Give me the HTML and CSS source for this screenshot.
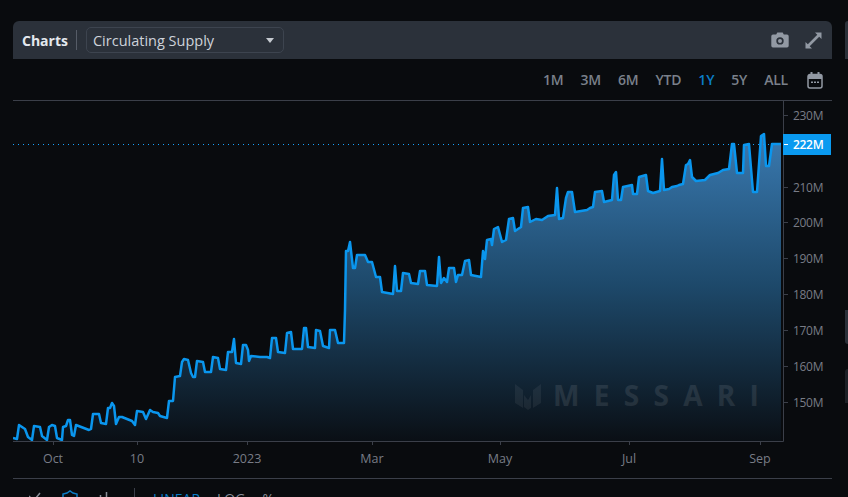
FILE: index.html
```html
<!DOCTYPE html>
<html lang="en">
<head>
<meta charset="UTF-8" />
<meta name="viewport" content="width=device-width, initial-scale=1" />
<title>Charts - Circulating Supply</title>
<link rel="stylesheet" href="styles.css">
</head>
<body>

<div class="card">
  <div class="card-head">
    <span class="card-title">Charts</span>
    <span class="head-divider"></span>
    <div class="select">
      <span>Circulating Supply</span>
      <span class="caret"></span>
    </div>
    <div class="head-icons">
      <svg class="icon" width="18" height="16" viewBox="0 0 18 16">
        <path class="icon-fill" fill-rule="evenodd" d="M2 2.500h3.200L6.300 .5h5.400l1.100 2H16a1.700 1.700 0 0 1 1.700 1.700v9.600A1.700 1.700 0 0 1 16 15.500H2a1.700 1.700 0 0 1-1.700-1.700V4.200A1.700 1.700 0 0 1 2 2.500zM9 5.200a3.700 3.700 0 1 0 0 7.400 3.700 3.700 0 0 0 0-7.400zM9 6.900a2 2 0 1 1 0 4 2 2 0 0 1 0-4z"/>
      </svg>
      <svg class="icon" width="17" height="17" viewBox="0 0 17 17">
        <path class="icon-fill" d="M10 .5h6.500V7l-2.300-2.300-9.500 9.500L7 16.500H.5V10l2.300 2.300 9.500-9.500z"/>
      </svg>
    </div>
  </div>

  <div class="range-bar">
    <button class="range-btn">1M</button>
    <button class="range-btn">3M</button>
    <button class="range-btn">6M</button>
    <button class="range-btn">YTD</button>
    <button class="range-btn active">1Y</button>
    <button class="range-btn">5Y</button>
    <button class="range-btn">ALL</button>
    <svg class="calendar" width="16" height="18" viewBox="0 0 16 18">
      <path class="cal-line" d="M1 5.500A2 2 0 0 1 3 3.500h10a2 2 0 0 1 2 2v9.500a2 2 0 0 1-2 2H3a2 2 0 0 1-2-2z"/>
      <path class="icon-fill" d="M1 4h14v4H1zM3.500 1h2v3h-2zM10.500 1h2v3h-2zM4 10.500h2v1.500H4zM7 10.500h2v1.500H7zM10 10.500h2v1.500h-2z"/>
    </svg>
  </div>

  <svg class="chart" width="819" height="377" viewBox="13 101 819 377">
    <defs>
      <linearGradient id="areaFill" gradientUnits="userSpaceOnUse" x1="0" y1="134" x2="0" y2="441">
        <stop offset="0" stop-color="#3a7ab1"/>
        <stop offset="0.5" stop-color="#1d4869"/>
        <stop offset="1" stop-color="#0a0f15"/>
      </linearGradient>
    </defs>

    <polygon id="area" class="area"></polygon>

    <g class="watermark">
      <path d="M515 384l8 6v18l-8-5zM524 395l4 5 3-5v13l-3 2-4-3zM533 390l8-6v19l-8 5z"/>
      <text class="watermark-text" x="553" y="406">MESSARI</text>
    </g>

    <line class="price-line" x1="13" y1="144.500" x2="783" y2="144.500"/>
    <polyline id="line" class="line"></polyline>

    <path class="axis" d="M783.500 101V441.500H13"/>
    <path class="axis" d="M53.500 442v3M137.500 442v3M247.500 442v3M372.500 442v3M500.500 442v3M629.500 442v3M760.500 442v3"/>
    <path class="axis" d="M784 115.500h4M784 187.500h4M784 222.500h4M784 258.500h4M784 294.500h4M784 330.500h4M784 366.500h4M784 402.500h4"/>

    <text class="y-label" x="793" y="120">230M</text>
    <text class="y-label" x="793" y="192">210M</text>
    <text class="y-label" x="793" y="227">200M</text>
    <text class="y-label" x="793" y="263">190M</text>
    <text class="y-label" x="793" y="299">180M</text>
    <text class="y-label" x="793" y="335">170M</text>
    <text class="y-label" x="793" y="371">160M</text>
    <text class="y-label" x="793" y="407">150M</text>

    <rect class="price-tag" x="783" y="134" width="48" height="21"/>
    <path class="price-tick" d="M784 144.500h4"/>
    <text class="price-text" x="793" y="149">222M</text>

    <text class="x-label" x="53" y="463">Oct</text>
    <text class="x-label" x="137" y="463">10</text>
    <text class="x-label" x="247" y="463">2023</text>
    <text class="x-label" x="372" y="463">Mar</text>
    <text class="x-label" x="500" y="463">May</text>
    <text class="x-label" x="629" y="463">Jul</text>
    <text class="x-label" x="760" y="463">Sep</text>
  </svg>

  <div class="tool-bar">
    <svg class="tool tool-check" width="14" height="18" viewBox="0 0 14 18">
      <path class="tool-line" d="M0 8l4.500 5L11 5"/>
    </svg>
    <svg class="tool tool-star" width="16" height="18" viewBox="0 0 16 18">
      <path class="tool-line blue" d="M1 18V6l4-1 3-2 3 2 4 1v12"/>
    </svg>
    <svg class="tool tool-bars" width="14" height="18" viewBox="0 0 14 18">
      <path class="tool-line" d="M5.500 7v11M11.500 4v14"/>
    </svg>
    <span class="tool-divider"></span>
    <span class="scale active">LINEAR</span>
    <span class="scale">LOG</span>
    <span class="scale">%</span>
  </div>
</div>

<div class="side">
  <div class="side-head"></div>
  <div class="side-block"></div>
  <div class="side-block dim"></div>
</div>

<script>
  // traced from the supply series, in page pixels
  const points = [
    [13,438],[17,439],[19,425],[22,427],[25,429],[28,437],[32,440],[34,426],[40,427],[42,436],
    [47,440],[49,427],[52,425],[55,426],[57,438],[62,440],[63,427],[66,426],[68,420],[70,420],
    [72,435],[74,436],[76,425],[89,430],[91,429],[93,414],[99,414],[101,423],[106,424],[108,408],
    [110,408],[112,403],[114,406],[116,424],[119,417],[122,417],[132,421],[135,425],[137,411],[143,412],
    [146,419],[150,410],[153,412],[158,413],[160,416],[167,418],[169,401],[173,401],[175,377],[180,376],
    [182,362],[184,359],[188,360],[191,373],[193,377],[195,377],[197,361],[203,362],[205,372],[211,372],
    [213,357],[218,358],[220,369],[226,370],[228,352],[232,352],[234,339],[236,363],[241,364],[243,345],
    [246,345],[248,350],[249,361],[251,356],[260,357],[267,357],[270,358],[272,338],[276,338],[278,352],
    [285,353],[287,333],[291,332],[293,349],[302,349],[304,328],[306,328],[308,347],[315,348],[316,330],
    [320,331],[323,346],[329,348],[330,330],[335,330],[338,343],[344,343],[345,310],[346,251],[348,251],
    [350,242],[353,268],[355,268],[357,255],[365,255],[368,262],[372,262],[376,277],[380,277],[382,292],
    [393,294],[395,266],[397,291],[401,291],[403,273],[409,274],[411,283],[418,284],[420,271],[425,271],
    [427,285],[437,286],[439,257],[441,283],[444,278],[447,282],[449,268],[454,268],[456,282],[458,275],
    [462,275],[465,261],[469,260],[471,275],[481,277],[483,251],[485,259],[487,240],[491,239],[492,245],
    [494,229],[498,227],[502,242],[506,240],[509,219],[513,218],[515,231],[521,227],[523,208],[528,207],
    [530,222],[536,219],[542,220],[548,216],[555,215],[557,188],[559,219],[563,218],[566,198],[568,192],
    [572,192],[575,212],[587,210],[590,208],[593,207],[595,192],[602,191],[604,202],[612,200],[614,175],
    [616,172],[618,200],[621,200],[623,187],[632,185],[633,194],[637,194],[639,177],[646,175],[648,191],
    [653,193],[660,191],[662,159],[664,190],[669,189],[672,187],[677,186],[679,185],[683,184],[686,165],
    [688,164],[690,160],[692,177],[696,181],[705,180],[710,175],[718,173],[723,170],[729,169],[732,144],
    [734,144],[737,173],[743,173],[744,145],[749,144],[753,192],[757,192],[761,136],[764,134],[766,166],
    [769,166],[772,144],[777,144],[781,144]
  ];

  const linePts = points.map(p => p.join(',')).join(' ');
  document.getElementById('line').setAttribute('points', linePts);
  document.getElementById('area').setAttribute('points', `13,441 ${linePts} 781,441`);
</script>

</body>
</html>
```

FILE: styles.css
```css
html, body {
  height: 497px;
  overflow: hidden;
}
body {
  margin: 0;
  padding: 21px 0 0 13px;
  box-sizing: border-box;
  display: flex;
  gap: 13px;
  background-color: #090b0e;
  font-family: "Open Sans", "Noto Sans", sans-serif;
}
.card {
  width: 819px;
  flex-shrink: 0;
}
.card-head {
  height: 38px;
  display: flex;
  align-items: center;
  padding: 0 10px 0 9px;
  background-color: #2b313a;
  border-radius: 6px 6px 0 0;
}
.card-title {
  font-size: 14px;
  font-weight: 700;
  color: #e4e8ee;
}
.head-divider {
  width: 1px;
  height: 20px;
  margin: 0 9px 0 8px;
  background-color: #565c67;
}
.select {
  width: 198px;
  height: 26px;
  box-sizing: border-box;
  display: flex;
  align-items: center;
  justify-content: space-between;
  padding: 0 9px 0 6px;
  border: 1px solid #3d444f;
  border-radius: 5px;
  font-size: 14.500px;
  color: #ced3da;
}
.caret {
  width: 0;
  height: 0;
  border-left: 4px solid transparent;
  border-right: 4px solid transparent;
  border-top: 5px solid #c6cad0;
}
.head-icons {
  margin-left: auto;
  display: flex;
  align-items: center;
  gap: 16px;
}
.icon-fill {
  fill: #9299a3;
}
.range-bar {
  height: 42px;
  box-sizing: border-box;
  display: flex;
  align-items: center;
  justify-content: flex-end;
  gap: 17px;
  padding-right: 9px;
  border-bottom: 1px solid #3b3f49;
}
.range-btn {
  padding: 0;
  border: 0;
  background: none;
  font-family: inherit;
  font-size: 14px;
  font-weight: 600;
  letter-spacing: -0.2px;
  color: #7a808a;
  cursor: pointer;
}
.range-btn.active {
  color: #0a7dc6;
}
.calendar {
  margin-left: 2px;
}
.cal-line {
  fill: none;
  stroke: #9299a3;
  stroke-width: 1.500;
}
.chart {
  display: block;
  border-bottom: 1px solid #3b3f49;
}
.area {
  fill: url(#areaFill);
}
.line {
  fill: none;
  stroke: #0a96ee;
  stroke-width: 2.500;
  stroke-linejoin: round;
}
.price-line {
  stroke: #18a4ff;
  stroke-width: 1;
  stroke-dasharray: 1 4;
}
.axis {
  fill: none;
  stroke: #3b3f49;
  stroke-width: 1;
}
.y-label, .x-label {
  font-size: 12px;
  letter-spacing: -0.3px;
  fill: #787c86;
}
.x-label {
  text-anchor: middle;
  font-size: 12.500px;
  letter-spacing: 0;
}
.price-tag {
  fill: #0a9af0;
}
.price-tick {
  stroke: #fff;
}
.price-text {
  font-size: 12px;
  font-weight: 600;
  letter-spacing: -0.3px;
  fill: #fff;
}
.watermark path {
  fill: #fff;
  opacity: 0.06;
}
.watermark-text {
  font-size: 28px;
  font-weight: 700;
  letter-spacing: 14.300px;
  fill: #fff;
  opacity: 0.09;
}
.tool-bar {
  display: flex;
  align-items: flex-start;
  padding: 9px 0 0 16px;
  font-size: 14px;
}
.tool-check {
  margin-right: 19px;
}
.tool-star {
  margin-right: 17px;
}
.tool-line {
  fill: none;
  stroke: #8a8f98;
  stroke-width: 1.500;
}
.tool-line.blue {
  stroke: #0a7dc6;
}
.tool-divider {
  width: 1px;
  height: 20px;
  margin: 0 18px 0 25px;
  background-color: #3b3f49;
}
.scale {
  margin-top: 4px;
  margin-right: 17px;
  line-height: 14px;
  font-weight: 500;
  color: #8a8f98;
}
.scale.active {
  color: #0a7dc6;
}
.side {
  flex: 1;
  display: flex;
  flex-direction: column;
}
.side-head {
  height: 38px;
  background-color: #2b313a;
  border-radius: 6px 0 0 0;
}
.side-block {
  height: 34px;
  margin-top: 251px;
  background-color: #2b313a;
  border-radius: 0 0 0 4px;
}
.side-block.dim {
  margin-top: 25px;
  background-color: #1d2127;
  border-radius: 4px 0 0 0;
}
```
